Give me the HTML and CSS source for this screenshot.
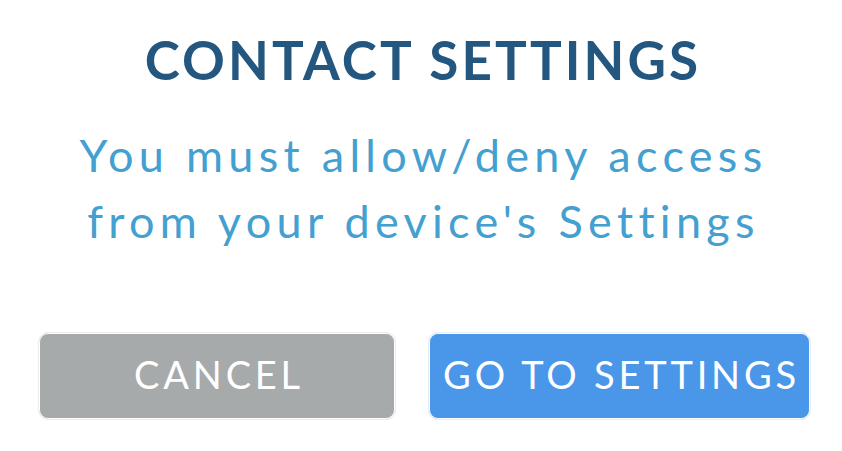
FILE: index.html
```html
<!DOCTYPE html>
<html lang="en">
<head>
  <meta charset="UTF-8" />
  <meta name="viewport" content="width=device-width, initial-scale=1.0" />
  <title>Contact Settings</title>
  <link rel="stylesheet" href="styles.css">
</head>
<body>
  <div class="dialog">
    <h1>CONTACT SETTINGS</h1>
    <p class="message">You must allow/deny access<br>from your device's Settings</p>

    <div class="actions">
      <button class="btn btn-cancel" type="button">CANCEL</button>
      <button class="btn btn-settings" type="button">GO TO SETTINGS</button>
    </div>
  </div>
</body>
</html>
```

FILE: styles.css
```css
body {
  margin: 0;
  font-family: 'Lato', 'Noto Sans', sans-serif;
  background-color: #fff;
}

.dialog {
  width: 842px;
  height: 451px;
  text-align: center;
}

h1 {
  margin: 0;
  padding-top: 30px;
  padding-left: 4px;
  font-size: 53px;
  line-height: 60px;
  font-weight: 700;
  letter-spacing: 3.1px;
  color: #245780;
}

.message {
  margin: 0;
  padding-top: 32px;
  padding-left: 5px;
  font-size: 45px;
  line-height: 66px;
  font-weight: 400;
  letter-spacing: 5.3px;
  color: #43a0d1;
}

.actions {
  display: flex;
  gap: 32px;
  padding: 78px 0 0 38px;
}

.btn {
  height: 88px;
  border: 1px solid #ececec;
  border-radius: 10px;
  padding: 0 0 4px 4px;
  font-family: inherit;
  font-size: 38px;
  font-weight: 400;
  letter-spacing: 3.8px;
  color: #fff;
  background-clip: padding-box;
  box-shadow: inset 0 0 0 1px #fff;
  cursor: pointer;
}

.btn-cancel {
  width: 358px;
  background-color: #a7aaab;
}

.btn-settings {
  width: 383px;
  background-color: #4a96e8;
  border-color: #e4eefb;
}
```
